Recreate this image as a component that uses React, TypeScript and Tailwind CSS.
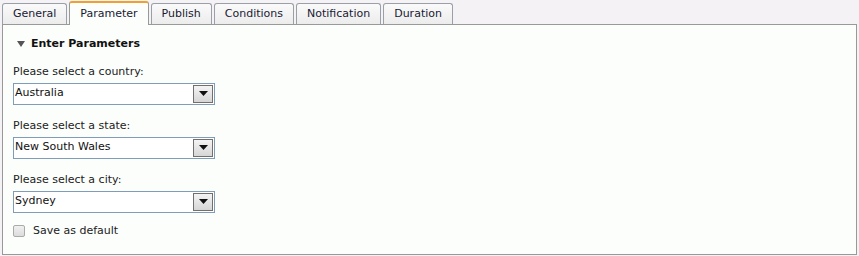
import React from 'react'

const tabs = ['General', 'Parameter', 'Publish', 'Conditions', 'Notification', 'Duration']

function Select({ value }: { value: string }) {
  return (
    <div className="flex h-[22px] w-[202px] items-stretch border border-[#7f9db9] bg-white">
      <div className="flex flex-1 items-center pl-[1px] text-[11px] text-[#111]">{value}</div>
      <div className="m-[1px] flex w-[20px] items-center justify-center border border-[#707070] bg-gradient-to-b from-[#f4f4f4] to-[#d6d6d6]">
        <svg width="9" height="5" viewBox="0 0 9 5">
          <path d="M0 0h9L4.5 5z" fill="#111" />
        </svg>
      </div>
    </div>
  )
}

export default function App() {
  return (
    <div className="h-[256px] w-[859px] bg-[#f4f2f4] pl-[2px] pt-[1px] font-['DejaVu_Sans',sans-serif] text-[#222]">
      <div className="flex h-[23px] items-end gap-[2px]">
        {tabs.map((t) =>
          t === 'Parameter' ? (
            <div
              key={t}
              className="relative z-10 -mb-[1px] flex h-[24px] items-center rounded-t-[3px] border border-b-0 border-[#999] border-t-[2px] border-t-[#f0a030] bg-[#fcfefc] px-[10px] text-[11px] text-[#1a1a33]"
            >
              {t}
            </div>
          ) : (
            <div
              key={t}
              className="flex h-[21px] items-center rounded-t-[3px] border border-b-0 border-[#9aa0a8] bg-gradient-to-b from-[#fafafa] to-[#ececec] px-[10px] text-[11px] text-[#1a1a33]"
            >
              {t}
            </div>
          ),
        )}
      </div>
      <div className="h-[231px] w-[855px] border border-[#999] bg-[#fcfefc] pl-[10px] pt-[11px]">
        <div className="flex items-center gap-[6px] pl-[4px] text-[11px] font-bold text-[#111]">
          <svg width="8" height="6" viewBox="0 0 8 6">
            <path d="M0 0h8L4 6z" fill="#555" />
          </svg>
          Enter Parameters
        </div>
        <div className="mt-[12px] flex flex-col">
          <div className="text-[11px] leading-[14px]">Please select a country:</div>
          <div className="mt-[4px]">
            <Select value="Australia" />
          </div>
          <div className="mt-[14px] text-[11px] leading-[14px]">Please select a state:</div>
          <div className="mt-[4px]">
            <Select value="New South Wales" />
          </div>
          <div className="mt-[14px] text-[11px] leading-[14px]">Please select a city:</div>
          <div className="mt-[4px]">
            <Select value="Sydney" />
          </div>
          <div className="mt-[10px] flex items-center gap-[8px] text-[11px]">
            <div className="h-[12px] w-[12px] rounded-[2px] border border-[#aaa] bg-gradient-to-b from-[#f0f0f0] to-[#dcdcdc]" />
            Save as default
          </div>
        </div>
      </div>
    </div>
  )
}
